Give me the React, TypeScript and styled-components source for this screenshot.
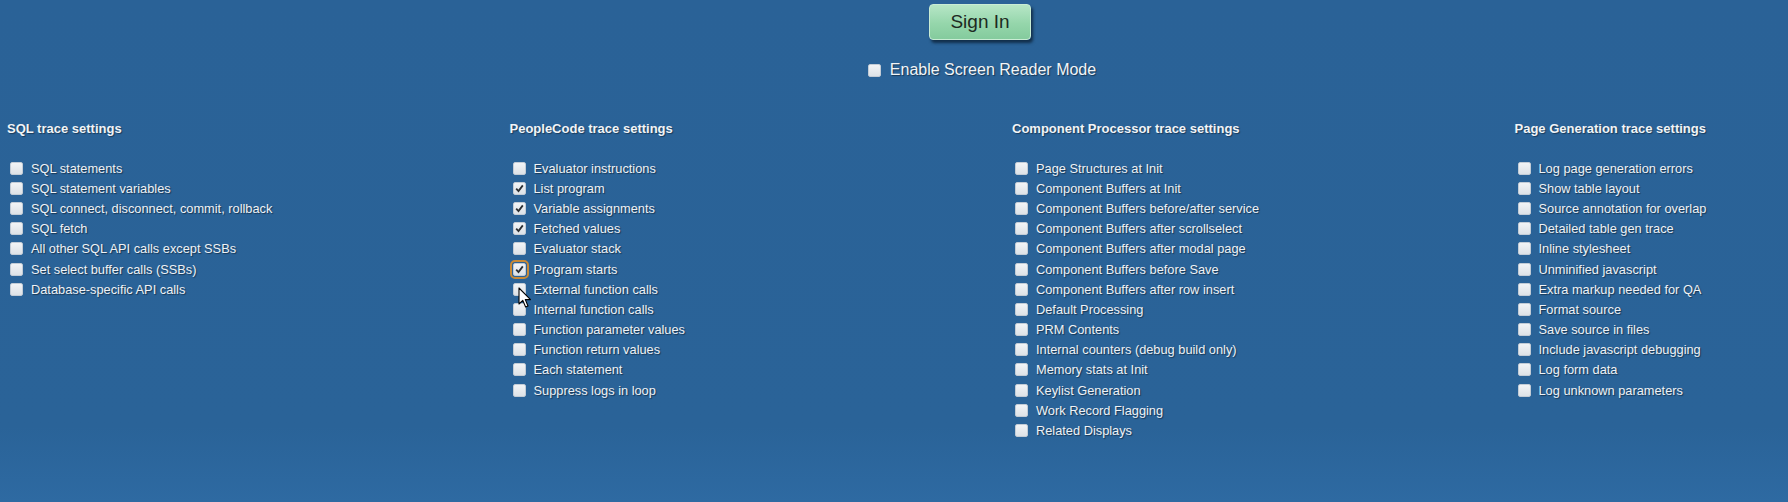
import React from "react";
import styled, { createGlobalStyle, css } from "styled-components";

const GlobalStyle = createGlobalStyle`
  html, body {
    margin: 0;
    padding: 0;
    background: #2a6398;
    overflow: hidden;
  }
  body {
    font-family: "Liberation Sans", Arial, sans-serif;
  }
`;

const Page = styled.div`
  width: 100%;
  min-height: 502px;
  padding-top: 4px;
  box-sizing: border-box;
  background: linear-gradient(180deg, #2a6297 0%, #2a6398 85%, #2e6aa2 100%);
  position: relative;
  overflow: hidden;
`;

const Top = styled.div`
  display: flex;
  flex-direction: column;
  align-items: center;
  padding-left: 172px;
`;

const SignInButton = styled.button`
  width: 102px;
  height: 36px;
  border: 1px solid #c9ecd4;
  border-radius: 4px;
  background: linear-gradient(180deg, #b6e6c6 0%, #95d6ab 55%, #84cb9d 100%);
  box-shadow: 2px 3px 3px rgba(10, 30, 50, 0.75);
  font-family: "Liberation Sans", Arial, sans-serif;
  font-size: 19px;
  color: #1d2a22;
  padding: 0;
  cursor: pointer;
`;

const ReaderRow = styled.label`
  margin-top: 21px;
  height: 18px;
  display: flex;
  align-items: center;
  gap: 9px;
  font-size: 16px;
  color: #f1f4f7;
  text-shadow: 1px 1px 1px rgba(0, 0, 0, 0.45);
  margin-left: 4px;
`;

const Columns = styled.div`
  margin-top: 42px;
  padding-left: 7px;
  display: grid;
  grid-template-columns: repeat(3, 502.5px) 1fr;
  align-items: start;
`;

const Column = styled.section`
  display: flex;
  flex-direction: column;
`;

const Heading = styled.h2`
  margin: 0 0 22px 0;
  font-size: 13px;
  line-height: 15px;
  font-weight: bold;
  color: #f1f4f7;
  text-shadow: 1px 1px 1px rgba(0, 0, 0, 0.4);
`;

const Row = styled.label`
  height: 20.2px;
  display: flex;
  align-items: center;
  gap: 8px;
  padding-left: 3px;
  font-size: 12.8px;
  color: #eef2f6;
  text-shadow: 1px 1px 1px rgba(0, 0, 0, 0.45);
  white-space: nowrap;
`;

const Box = styled.span<{ $checked?: boolean; $focused?: boolean }>`
  position: relative;
  flex: 0 0 auto;
  width: 13px;
  height: 13px;
  box-sizing: border-box;
  border-radius: 2px;
  background: linear-gradient(180deg, #f2f4f6 0%, #dde2e7 100%);
  border: 1px solid #c3ccd6;
  display: flex;
  align-items: center;
  justify-content: center;
  ${(p) =>
    p.$focused &&
    css`
      outline: 2px solid #c98a36;
      outline-offset: 1px;
    `}
`;

const CheckMark = () => (
  <svg width="9" height="9" viewBox="0 0 9 9">
    <path d="M1.2 4.6 L3.5 7 L7.8 1.4" fill="none" stroke="#2b2f33" strokeWidth="1.8" />
  </svg>
);

const Cursor = styled.svg`
  position: absolute;
  left: 518px;
  top: 287px;
  pointer-events: none;
`;

type Item = { label: string; checked?: boolean; focused?: boolean };

const groups: { title: string; items: Item[] }[] = [
  {
    title: "SQL trace settings",
    items: [
      { label: "SQL statements" },
      { label: "SQL statement variables" },
      { label: "SQL connect, disconnect, commit, rollback" },
      { label: "SQL fetch" },
      { label: "All other SQL API calls except SSBs" },
      { label: "Set select buffer calls (SSBs)" },
      { label: "Database-specific API calls" },
    ],
  },
  {
    title: "PeopleCode trace settings",
    items: [
      { label: "Evaluator instructions" },
      { label: "List program", checked: true },
      { label: "Variable assignments", checked: true },
      { label: "Fetched values", checked: true },
      { label: "Evaluator stack" },
      { label: "Program starts", checked: true, focused: true },
      { label: "External function calls" },
      { label: "Internal function calls" },
      { label: "Function parameter values" },
      { label: "Function return values" },
      { label: "Each statement" },
      { label: "Suppress logs in loop" },
    ],
  },
  {
    title: "Component Processor trace settings",
    items: [
      { label: "Page Structures at Init" },
      { label: "Component Buffers at Init" },
      { label: "Component Buffers before/after service" },
      { label: "Component Buffers after scrollselect" },
      { label: "Component Buffers after modal page" },
      { label: "Component Buffers before Save" },
      { label: "Component Buffers after row insert" },
      { label: "Default Processing" },
      { label: "PRM Contents" },
      { label: "Internal counters (debug build only)" },
      { label: "Memory stats at Init" },
      { label: "Keylist Generation" },
      { label: "Work Record Flagging" },
      { label: "Related Displays" },
    ],
  },
  {
    title: "Page Generation trace settings",
    items: [
      { label: "Log page generation errors" },
      { label: "Show table layout" },
      { label: "Source annotation for overlap" },
      { label: "Detailed table gen trace" },
      { label: "Inline stylesheet" },
      { label: "Unminified javascript" },
      { label: "Extra markup needed for QA" },
      { label: "Format source" },
      { label: "Save source in files" },
      { label: "Include javascript debugging" },
      { label: "Log form data" },
      { label: "Log unknown parameters" },
    ],
  },
];

export default function App() {
  return (
    <>
      <GlobalStyle />
      <Page>
        <Top>
          <SignInButton>Sign In</SignInButton>
          <ReaderRow>
            <Box />
            <span>Enable Screen Reader Mode</span>
          </ReaderRow>
        </Top>
        <Columns>
          {groups.map((g) => (
            <Column key={g.title}>
              <Heading>{g.title}</Heading>
              {g.items.map((it) => (
                <Row key={it.label}>
                  <Box $checked={it.checked} $focused={it.focused}>
                    {it.checked && <CheckMark />}
                  </Box>
                  <span>{it.label}</span>
                </Row>
              ))}
            </Column>
          ))}
        </Columns>
        <Cursor width="14" height="22" viewBox="0 0 14 22">
          <path
            d="M1 1 L1 17 L4.8 13.4 L7.6 20 L10 19 L7.3 12.6 L12.5 12.6 Z"
            fill="#ffffff"
            stroke="#000000"
            strokeWidth="1.1"
            strokeLinejoin="round"
          />
        </Cursor>
      </Page>
    </>
  );
}
